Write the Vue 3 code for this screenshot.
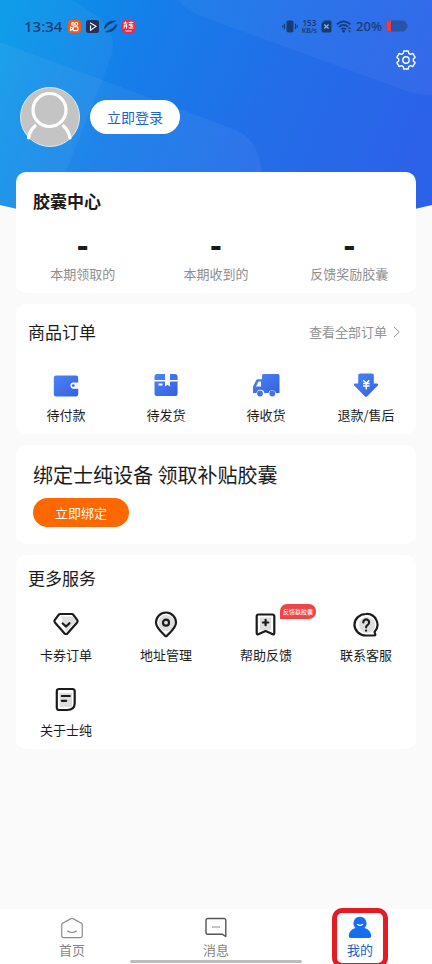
<script setup>
import { ref } from 'vue'

const stats = [
  { value: '-', label: '本期领取的' },
  { value: '-', label: '本期收到的' },
  { value: '-', label: '反馈奖励胶囊' },
]
const orders = [
  { icon: 'wallet', label: '待付款' },
  { icon: 'box', label: '待发货' },
  { icon: 'truck', label: '待收货' },
  { icon: 'refund', label: '退款/售后' },
]
const services = [
  { icon: 'coupon', label: '卡券订单' },
  { icon: 'pin', label: '地址管理' },
  { icon: 'feedback', label: '帮助反馈', badge: '反馈赢胶囊' },
  { icon: 'support', label: '联系客服' },
  { icon: 'about', label: '关于士纯' },
]
const tabs = [
  { id: 'home', label: '首页' },
  { id: 'message', label: '消息' },
  { id: 'mine', label: '我的' },
]
const active = ref('mine')
</script>

<template>
  <div class="page">
    <svg class="backdrop" viewBox="0 0 432 232" preserveAspectRatio="none" aria-hidden="true">
      <defs>
        <linearGradient id="sky" gradientUnits="userSpaceOnUse" x1="0" y1="30" x2="400" y2="200">
          <stop offset="0" stop-color="#0599e8" />
          <stop offset="0.32" stop-color="#167de9" />
          <stop offset="0.65" stop-color="#236de8" />
          <stop offset="1" stop-color="#2c62e8" />
        </linearGradient>
        <clipPath id="curve"><path d="M0 0H432V205Q216 258 0 205Z" /></clipPath>
      </defs>
      <g clip-path="url(#curve)">
        <path d="M0 0H432V232H0Z" fill="url(#sky)" />
        <path d="M0 0H72L96 15Q119 34 111 58L62 182L40 232H0Z" fill="#fff" fill-opacity=".045" />
        <path d="M0 42L236 130Q262 142 262 180V232H0Z" fill="#fff" fill-opacity=".05" />
        <path d="M178 0Q186 10 200 16L404 90Q416 95 432 95V0Z" fill="#fff" fill-opacity=".045" />
      </g>
    </svg>

    <header class="header">
      <div class="status">
        <div class="status-side">
          <span class="clock">13:34</span>
          <svg width="13" height="13" viewBox="0 0 13 13" aria-hidden="true">
            <rect width="13" height="13" rx="3" fill="#ec5b23" />
            <g fill="none" stroke="#fff" stroke-width="1.1"><circle cx="5" cy="3.9" r="1.3" /><circle cx="8.3" cy="3.9" r="1.4" /><rect x="5" y="6.8" width="5" height="3.8" rx="1" /><path d="M2.6 7v3.4L5 9.2V8.1Z" /></g>
          </svg>
          <svg width="13" height="13" viewBox="0 0 13 13" aria-hidden="true">
            <rect width="13" height="13" rx="2.5" fill="#252f5c" />
            <path d="M4 2.8L10 6.4L4.6 10.2V5.6" fill="none" stroke="#fff" stroke-width="1.1" />
          </svg>
          <svg width="13" height="13" viewBox="0 0 13 13" aria-hidden="true">
            <path d="M.8 8.500C0 4.500 5.500.2 11.500 1.200C7 2.600 3 5 .8 8.500ZM12.200 4.500C13 8.500 7.500 12.800 1.500 11.800C6 10.400 10 8 12.200 4.500Z" fill="#123c70" stroke="#123c70" stroke-width=".8" stroke-linejoin="round" />
          </svg>
          <svg width="13" height="13" viewBox="0 0 13 13" aria-hidden="true">
            <rect width="13" height="13" rx="3" fill="#e92c49" />
            <path d="M1.5 3h4M3.5 1.5L2 8.5M1.5 6h4M4.5 4v4.5M6.5 2.5h5M9 1.5v7M6.5 5h5M6.5 8h5M7 4l4 3M3.5 11h6" fill="none" stroke="#fff" stroke-width=".9" />
          </svg>
        </div>
        <div class="status-side right">
          <svg width="16" height="13" viewBox="0 0 16 13" aria-hidden="true">
            <rect x="4.5" y=".5" width="7" height="12" rx="1.8" fill="#173c72" />
            <path d="M2.5 3.7v5.6M.7 5.2v2.6M13.5 3.7v5.6M15.3 5.2v2.6" stroke="#173c72" stroke-width="1.2" />
          </svg>
          <span class="speed"><b>153</b><b class="unit">KB/s</b></span>
          <svg width="11" height="13" viewBox="0 0 11 13" aria-hidden="true">
            <path d="M3.5.5H9a1.6 1.6 0 0 1 1.5 1.6v8.8A1.6 1.6 0 0 1 9 12.500H2A1.6 1.6 0 0 1 .5 11V3.500Z" fill="#173c72" />
            <path d="M3.200 4.500l4.400 4M7.600 4.500l-4.400 4" stroke="#8fb5ee" stroke-width="1.200" />
          </svg>
          <svg width="16" height="13" viewBox="0 0 16 13" aria-hidden="true">
            <g fill="none" stroke="#173c72" stroke-width="1.700"><path d="M.8 4.300Q7.500-1.500 14.500 4.300M3 6.900Q7.500 3 12.200 6.900M5.200 9.300Q7.500 7.300 10 9.300" /></g>
            <circle cx="7.600" cy="11.300" r="1.400" fill="#173c72" />
            <path d="M13.500 7l1.500 2h-3zM13.500 12.500l1.500-2h-3z" fill="#173c72" />
          </svg>
          <span class="percent">20%</span>
          <svg width="22" height="12" viewBox="0 0 22 12" aria-hidden="true">
            <path d="M3 .5H17.500a3 3 0 0 1 2.700 2.500L21.500 4.500v3L20.200 9a3 3 0 0 1-2.700 2.500H3A2.500 2.500 0 0 1 .5 9V3A2.500 2.500 0 0 1 3 .5Z" fill="#2854a8" />
            <path d="M3 .5H5v11H3A2.500 2.500 0 0 1 .5 9V3A2.500 2.500 0 0 1 3 .5Z" fill="#f23b3b" />
          </svg>
        </div>
      </div>

      <div class="tools">
        <button class="plain" type="button" aria-label="设置">
          <svg width="20" height="20" viewBox="0 0 20 20" fill="none" stroke="#fff" stroke-width="1.400" stroke-linejoin="round">
            <path d="M7.800 1h4.400l.6 2.400 1.600.9 2.500-.8 2.200 3.900-1.800 1.700v1.800l1.800 1.700-2.200 3.900-2.500-.8-1.600.9-.6 2.400H7.800l-.6-2.400-1.600-.9-2.500.8L.9 12.600l1.800-1.700V9.100L.9 7.400l2.200-3.900 2.500.8 1.600-.9Z" />
            <circle cx="10" cy="10" r="3.200" />
          </svg>
        </button>
      </div>

      <div class="profile">
        <svg class="avatar" viewBox="0 0 60 60" aria-hidden="true">
          <circle cx="30" cy="30" r="29.500" fill="#c4c4c4" stroke="#dce8f5" />
          <g fill="none" stroke="#fff" stroke-width="3.200" stroke-linecap="round"><circle cx="29.500" cy="23" r="16.500" /><path d="M15 39Q9.500 44 8.500 51M43.500 39Q49 44 50 51" /></g>
        </svg>
        <button class="login" type="button">立即登录</button>
      </div>
    </header>

    <main class="cards">
      <section class="card capsule">
        <h2 class="strong">胶囊中心</h2>
        <div class="stats">
          <div v-for="s in stats" :key="s.label" class="stat">
            <span class="value">{{ s.value }}</span>
            <span class="caption">{{ s.label }}</span>
          </div>
        </div>
      </section>

      <section class="card orders">
        <div class="card-head">
          <h2>商品订单</h2>
          <a class="more" href="#orders">查看全部订单
            <svg width="7" height="12" viewBox="0 0 7 12" fill="none" stroke="#999" aria-hidden="true"><path d="M.8.8L6.200 6L.8 11.200" /></svg>
          </a>
        </div>
        <div class="grid">
          <a v-for="o in orders" :key="o.icon" class="entry" href="#orders">
            <svg width="28" height="26" viewBox="0 0 28 26" aria-hidden="true">
              <defs><linearGradient :id="'blue-' + o.icon" x1="0" y1="0" x2="1" y2="1"><stop offset="0" stop-color="#4b85f7" /><stop offset="1" stop-color="#3560df" /></linearGradient></defs>
              <g v-if="o.icon === 'wallet'">
                <path d="M4 3.500H24a2.200 2.200 0 0 1 2.200 2.200V10.500H21.500a3 3 0 0 0 0 6.200h4.700v5.600A2.200 2.200 0 0 1 24 24.500H4a2.200 2.200 0 0 1-2.200-2.200V5.700A2.200 2.200 0 0 1 4 3.500Z" fill="url(#blue-wallet)" />
                <circle cx="21.300" cy="13.600" r="1.400" fill="#3d6de8" />
              </g>
              <g v-else-if="o.icon === 'box'">
                <path d="M5 2h8v6H2.500V4.500A2.500 2.500 0 0 1 5 2ZM18 2h5.200a2.500 2.500 0 0 1 2.400 2.500V8H18ZM2.500 9.500H13v5l2.600-1.800 2.400 1.800v-5h7.600V22a2 2 0 0 1-2 2H4.500a2 2 0 0 1-2-2Z" fill="url(#blue-box)" />
                <path d="M6.500 12.500h4" stroke="#fff" stroke-width="2" />
              </g>
              <g v-else-if="o.icon === 'truck'">
                <path d="M11.500 2H26a1.500 1.500 0 0 1 1.500 1.500V21H24a4 4 0 0 0-7.600 0h-4A4 4 0 0 0 4.500 21H1v-6.500L4 8.500A2 2 0 0 1 5.800 7.200H10V3.500A1.500 1.500 0 0 1 11.500 2Z" fill="url(#blue-truck)" />
                <path d="M6.500 9.500H9v5H4Z" fill="#fff" />
                <circle cx="8" cy="21.500" r="2.900" fill="#3f72eb" /><circle cx="20.300" cy="21.500" r="2.900" fill="#3f72eb" />
              </g>
              <g v-else>
                <path d="M8 1.500H20a1.800 1.800 0 0 1 1.800 1.800V11.500H25a1.100 1.100 0 0 1 .8 1.900L15.200 24.200a1.700 1.700 0 0 1-2.400 0L2.200 13.400A1.100 1.100 0 0 1 3 11.500H6.200V3.300A1.800 1.800 0 0 1 8 1.500Z" fill="url(#blue-refund)" />
                <path d="M11.300 8.200l3 3 3-3M11 11.500h6.600M11 14h6.600M14.300 11.200v6.300" fill="none" stroke="#fff" stroke-width="1.500" />
              </g>
            </svg>
            <span>{{ o.label }}</span>
          </a>
        </div>
      </section>

      <section class="card bind">
        <h2 class="large">绑定士纯设备 领取补贴胶囊</h2>
        <button class="bind-button" type="button">立即绑定</button>
      </section>

      <section class="card services">
        <h2>更多服务</h2>
        <div class="grid tall">
          <a v-for="s in services" :key="s.icon" class="entry" href="#services">
            <svg width="28" height="28" viewBox="0 0 28 28" fill="none" stroke="#1b1b1d" stroke-width="2.200" stroke-linejoin="round" stroke-linecap="round" aria-hidden="true">
              <g v-if="s.icon === 'coupon'">
                <path d="M9 6.500H21L24 11 14 22Z" fill="#dedede" stroke="none" />
                <path d="M8.200 4H19.800a2 2 0 0 1 1.600.8l3.900 5.400a1.800 1.800 0 0 1-.2 2.200L15.400 23.400a1.900 1.900 0 0 1-2.800 0L2.900 12.400a1.800 1.800 0 0 1-.2-2.200L6.600 4.800A2 2 0 0 1 8.200 4Z" />
                <path d="M10.700 13.500L14 16.500l3.500-3.300" />
              </g>
              <g v-else-if="s.icon === 'pin'">
                <circle cx="14.500" cy="13" r="8" fill="#dedede" stroke="none" />
                <path d="M14 2.500A10 10 0 0 0 4 12.500C4 18 10.500 22.800 13 25.700Q14 26.800 15 25.700C17.500 22.800 24 18 24 12.500A10 10 0 0 0 14 2.500Z" />
                <circle cx="14" cy="12.700" r="3" />
              </g>
              <g v-else-if="s.icon === 'feedback'">
                <path d="M8 7.500H19V20H8Z" fill="#dedede" stroke="none" />
                <path d="M6.500 4.500H20.500a1.800 1.800 0 0 1 1.800 1.800V23.300a1 1 0 0 1-1.500.9L13.600 21 6.200 24.200a1 1 0 0 1-1.500-.9V6.300a1.800 1.800 0 0 1 1.800-1.800Z" />
                <path d="M13.600 9.800v5.400M10.900 12.500h5.400" />
              </g>
              <g v-else-if="s.icon === 'support'">
                <circle cx="15" cy="15" r="8" fill="#dedede" stroke="none" />
                <path d="M14 4A11.500 10.700 0 1 0 14 25.500H22.600a.8.800 0 0 0 .7-1L22.500 22A10.700 10.700 0 0 0 14 4Z" />
                <path d="M11.300 12.500a2.900 2.900 0 1 1 4.600 2.200q-1.800 1.200-1.800 2.600M14.100 20.500v.2" />
              </g>
              <g v-else>
                <path d="M7.500 8H20V22H7.500Z" fill="#dedede" stroke="none" />
                <path d="M7 4H20.500a2.200 2.200 0 0 1 2.200 2.200V18Q22.700 25 15 25H7a2.200 2.200 0 0 1-2.200-2.200V6.200A2.200 2.200 0 0 1 7 4Z" />
                <path d="M9.800 11h8M9.800 15.800h4.400" />
              </g>
            </svg>
            <span>{{ s.label }}</span>
            <em v-if="s.badge" class="badge">{{ s.badge }}</em>
          </a>
        </div>
      </section>
    </main>

    <nav class="tabbar">
      <button v-for="t in tabs" :key="t.id" type="button" class="tab" :class="{ on: active === t.id }" @click="active = t.id">
        <svg width="24" height="24" viewBox="0 0 24 24" fill="none" aria-hidden="true">
          <g v-if="t.id === 'home'" stroke="#8c8c8c" stroke-width="1.200" stroke-linejoin="round" stroke-linecap="round">
            <path d="M11 2.600a2 2 0 0 1 2 0l8.500 4.600a1.700 1.700 0 0 1 .8 1.500V20a1.600 1.600 0 0 1-1.600 1.600H3.300A1.600 1.600 0 0 1 1.700 20V8.700a1.700 1.700 0 0 1 .8-1.500Z" /><path d="M7.500 15q4.500 3 9 0" />
          </g>
          <g v-else-if="t.id === 'message'" stroke="#555" stroke-width="1.400" stroke-linejoin="round">
            <path d="M3.800 2.500H20a1.800 1.800 0 0 1 1.800 1.800V20.500L18.500 18.300H3.800A1.800 1.800 0 0 1 2 16.500V4.300A1.800 1.800 0 0 1 3.800 2.500Z" /><path d="M8 11h8" stroke="#aaa" />
          </g>
          <g v-else>
            <path d="M12 .8A6.500 6.500 0 0 1 16.500 12C20 13 23 15.500 23.200 20A2 2 0 0 1 21.200 22H2.800A2 2 0 0 1 .8 20C1 15.500 4 13 7.500 12A6.500 6.500 0 0 1 12 .8Z" fill="#156df0" /><path d="M9.500 8.500q2.500 1.600 5 0" stroke="#fff" stroke-width="1.300" stroke-linecap="round" />
          </g>
        </svg>
        <span>{{ t.label }}</span>
        <i v-if="t.id === 'mine'" class="marker"></i>
      </button>
      <i class="handle"></i>
    </nav>
  </div>
</template>

<style>
body { background: #fafafa; }
</style>

<style scoped>
* { box-sizing: border-box; }
.page {
  position: relative;
  display: flex;
  flex-direction: column;
  min-height: 100vh;
  overflow: hidden;
  color: #1b1b1b;
  font-family: "Noto Sans CJK SC", sans-serif;
  font-size: 13px;
  line-height: 20px;
}
svg { display: block; flex: none; }
button { font: inherit; border: 0; padding: 0; cursor: pointer; }
a { color: inherit; text-decoration: none; }
h2 { margin: 0; font-size: 17px; line-height: 24px; font-weight: 400; }
.backdrop { position: absolute; top: 0; left: 0; width: 100%; height: 232px; }
.header { position: relative; padding-bottom: 25px; }
.status { display: flex; justify-content: space-between; align-items: center; height: 50px; padding: 2px 24px 0; }
.status-side { display: flex; align-items: center; gap: 5px; color: #173c72; font-family: "Noto Sans", sans-serif; font-weight: 500; }
.status-side.right { gap: 4px; }
.clock { font-size: 15px; margin-right: 1px; }
.percent { font-size: 13px; }
.speed { display: flex; flex-direction: column; align-items: center; font-size: 8px; line-height: 9px; }
.speed b { font-weight: 600; }
.speed .unit { font-size: 7px; line-height: 8px; }
.tools { display: flex; justify-content: flex-end; padding: 0 16px; }
.plain { background: none; }
.profile { display: flex; align-items: center; gap: 10px; padding: 17px 20px 0; }
.avatar { width: 60px; height: 60px; }
.login { padding: 7px 17px; border-radius: 17px; background: #fff; color: #1c62c8; font-size: 14px; line-height: 20px; }
.cards { position: relative; display: flex; flex-direction: column; gap: 11px; padding: 0 16px; flex: 1; }
.card { background: #fff; border-radius: 10px; }
.capsule { padding: 17px 0 9px; }
.strong { padding: 0 17px; font-weight: 700; }
.stats { display: grid; grid-template-columns: repeat(3, 1fr); padding-top: 16px; }
.stat { display: flex; flex-direction: column; align-items: center; gap: 7px; }
.value { font-size: 32px; line-height: 28px; font-weight: 900; }
.caption { color: #8e8e8e; }
.orders { padding: 16px 0 9px; }
.card-head { display: flex; align-items: center; justify-content: space-between; padding: 0 16px 0 12px; }
.more { display: flex; align-items: center; gap: 6px; color: #929292; }
.grid { display: grid; grid-template-columns: repeat(4, 1fr); row-gap: 20px; padding-top: 28px; }
.entry { position: relative; display: flex; flex-direction: column; align-items: center; gap: 7px; }
.bind { padding: 16px 17px 17px; }
.large { font-size: 20px; line-height: 28px; }
.bind-button { display: block; margin-top: 9px; padding: 5px 22px 4px; border-radius: 15px; background: #ff6700; color: #fff; }
.services { padding: 11px 0 9px; }
.services h2 { padding: 0 12px; }
.tall { padding-top: 20px; }
.badge { position: absolute; left: 64%; top: -6px; padding: 0 3px; border-radius: 7px 7px 7px 0; background: #ee4549; color: #fff; font-size: 6px; line-height: 15px; font-style: normal; white-space: nowrap; }
.tabbar { position: relative; display: grid; grid-template-columns: repeat(3, 1fr); height: 55px; background: #fff; }
.tab { position: relative; display: flex; flex-direction: column; align-items: center; padding-top: 7px; background: none; color: #858585; }
.tab.on { color: #1c62c8; }
.marker { position: absolute; top: -1px; bottom: -4px; left: 50%; width: 56px; margin-left: -28px; border: 5px solid #e51b23; border-radius: 10px; }
.handle { position: absolute; bottom: 1px; left: 30%; width: 40%; height: 3px; border-radius: 2px; background: #bdbdbd; }
</style>
